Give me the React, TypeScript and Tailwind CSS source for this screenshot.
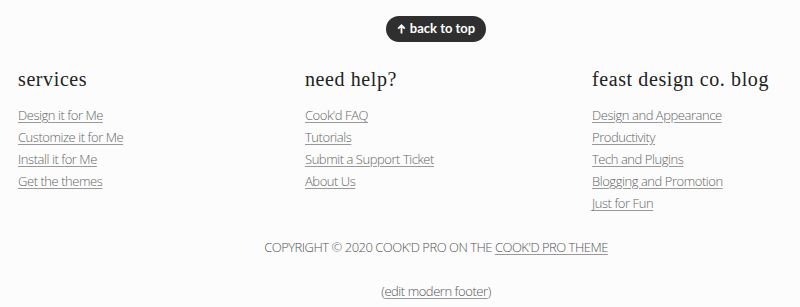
import React from "react";

const serif = { fontFamily: '"Liberation Serif", "DejaVu Serif", serif' };

function Col({ title, links }: { title: string; links: string[] }) {
  return (
    <div>
      <h3 className="text-[20px] leading-[28px] tracking-[0.6px] text-[#222] mb-[10px]" style={serif}>
        {title}
      </h3>
      <ul className="flex flex-col">
        {links.map((l) => (
          <li key={l} className="h-[22px] leading-[22px]">
            <a
              href="#"
              className="underline decoration-[#999] underline-offset-2 text-[#666] text-[13px] tracking-[-0.45px] font-light"
            >
              {l}
            </a>
          </li>
        ))}
      </ul>
    </div>
  );
}

export default function App() {
  return (
    <div
      className="w-[800px] h-[307px] bg-[#fcfcfc] overflow-hidden"
      style={{ fontFamily: '"Open Sans", "Noto Sans", sans-serif' }}
    >
      <div className="flex justify-center pl-[72px] pt-[16px]" style={{ fontFamily: 'Lato, "Open Sans", sans-serif' }}>
        <a
          href="#"
          className="flex items-center gap-[4px] h-[26px] px-[11px] rounded-full bg-[#2f2f2f] text-white text-[13px] font-bold"
        >
          <svg width="9" height="10" viewBox="0 0 9 10" fill="none" stroke="white" strokeWidth="1.8">
            <path d="M4.5 9.5V1.5M1.2 4.6L4.5 1.3L7.8 4.6" />
          </svg>
          back to top
        </a>
      </div>
      <div className="grid grid-cols-[222px_222px_222px] gap-x-[65px] px-[18px] pt-[23px]">
        <Col title="services" links={["Design it for Me", "Customize it for Me", "Install it for Me", "Get the themes"]} />
        <Col title="need help?" links={["Cook'd FAQ", "Tutorials", "Submit a Support Ticket", "About Us"]} />
        <Col
          title="feast design co. blog"
          links={["Design and Appearance", "Productivity", "Tech and Plugins", "Blogging and Promotion", "Just for Fun"]}
        />
      </div>
      <div className="flex justify-center pl-[72px] pt-[25px] text-[13px] tracking-[-0.5px] font-light text-[#555] uppercase">
        <span>
          Copyright © 2020 Cook'd Pro on the{" "}
          <a href="#" className="underline decoration-[#999] underline-offset-2">
            Cook'd Pro Theme
          </a>
        </span>
      </div>
      <div className="flex justify-center pl-[72px] pt-[24px] text-[13px] tracking-[-0.45px] font-light text-[#555]">
        <span>
          (<a href="#" className="underline decoration-[#999] underline-offset-2">edit modern footer</a>)
        </span>
      </div>
    </div>
  );
}
